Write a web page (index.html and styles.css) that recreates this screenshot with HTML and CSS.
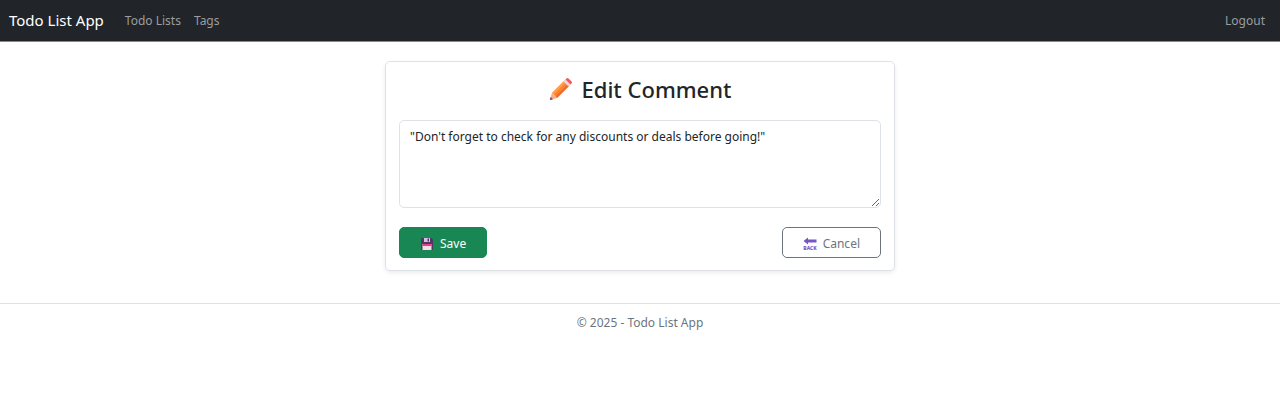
FILE: index.html
```html
<!DOCTYPE html>
<html lang="en">
<head>
<meta charset="utf-8">
<meta name="viewport" content="width=device-width, initial-scale=1">
<title>Edit Comment - Todo List App</title>
<link rel="stylesheet" href="styles.css">
</head>
<body>
<header class="navbar">
  <a class="brand" href="#">Todo List App</a>
  <nav class="nav-links">
    <a class="nav-link" href="#">Todo Lists</a>
    <a class="nav-link" href="#">Tags</a>
  </nav>
  <a class="nav-link logout" href="#">Logout</a>
</header>
<main class="content">
  <form class="card">
    <h1 class="title" id="form-title">
      <svg class="title-icon" viewBox="0 0 24 24" aria-hidden="true">
        <path fill="#ff822d" d="M3 16 15.500 3.500l5 5L8 21z"/>
        <path fill="#ffa04a" d="M3 16 15.500 3.500l1.500 1.500L4.500 17.500z"/>
        <path fill="#e96a35" d="M6.500 19.500 19 7l1.500 1.500L8 21z"/>
        <path fill="#e1d8ec" d="m14.500 4.500 2-2 5 5-2 2z"/>
        <path fill="#f8524f" d="m16.500 2.500 1-1q1-1 2 0l3 3q1 1 0 2l-1 1z"/>
        <path fill="#efb18c" d="m3 16 5 5-6.500 2q-1 0-.5-1z"/>
        <path fill="#7d4b55" d="m1.700 20 2.300 2.300-2.500.7q-1 0-.5-1z"/>
      </svg>
      Edit Comment
    </h1>
    <textarea class="comment" aria-labelledby="form-title">"Don't forget to check for any discounts or deals before going!"</textarea>
    <div class="actions">
      <button class="button save" type="submit">
        <svg class="button-icon" viewBox="0 0 14 14" aria-hidden="true">
          <path fill="#533566" d="M1 1.500Q1 1 1.500 1h10L13 2.500v10q0 .5-.5.5h-11q-.5 0-.5-.5z"/>
          <path fill="#cfc4e5" d="M4 1h6v4H4z"/>
          <path fill="#533566" d="M7.500 1.500H9v3H7.500z"/>
          <path fill="#f3dced" d="M2.500 7h9v6h-9z"/>
          <path fill="#ec407a" d="M2.500 7h9v2h-9z"/>
        </svg>
        Save
      </button>
      <a class="button cancel" href="#">
        <svg class="button-icon" viewBox="0 0 14 14" aria-hidden="true">
          <path fill="#7656c5" d="M.5 4 5 .5v2h8.500v3H5v2z"/>
          <text class="back-text" x="7" y="13">BACK</text>
        </svg>
        Cancel
      </a>
    </div>
  </form>
</main>
<footer class="footer">© 2025 - Todo List App</footer>
</body>
</html>
```
FILE: styles.css
```css
* {
  box-sizing: border-box;
}

body {
  margin: 0;
  background: #fff;
  color: #212529;
  font-family: "Noto Sans", "Open Sans", sans-serif;
  font-size: 12px;
  line-height: 20px;
}

.navbar {
  display: flex;
  align-items: center;
  padding: 6px 9px 7px;
  background: #212529;
  border-bottom: 1px solid #85888b;
}

.brand {
  margin-right: 15px;
  color: #fff;
  font-size: 15px;
  line-height: 28px;
  text-decoration: none;
}

.nav-links {
  display: flex;
  gap: 1px;
}

.nav-link {
  padding: 5px 6px 3px;
  color: #9b9d9f;
  text-decoration: none;
}

.logout {
  margin-left: auto;
}

.content {
  padding: 19px 10px 32px;
}

.card {
  max-width: 510px;
  margin: 0 auto;
  padding: 12px 13px;
  border: 1px solid #dee2e6;
  border-radius: 5px;
  box-shadow: 0 2px 4px rgba(0, 0, 0, 0.08);
}

.title {
  display: flex;
  align-items: center;
  justify-content: center;
  gap: 9px;
  margin: 0 0 16px;
  font-size: 22px;
  font-weight: 500;
  line-height: 30px;
}

.title-icon {
  width: 24px;
  height: 24px;
}

.comment {
  display: block;
  width: 100%;
  height: 88px;
  padding: 6px 10px;
  border: 1px solid #dee2e6;
  border-radius: 5px;
  background: #fff;
  color: inherit;
  font: inherit;
  resize: vertical;
}

.actions {
  display: flex;
  justify-content: space-between;
  margin-top: 19px;
}

.button {
  display: flex;
  align-items: center;
  gap: 6px;
  padding: 6px 20px 3px;
  border: 1px solid;
  border-radius: 5px;
  font: inherit;
  text-decoration: none;
}

.button-icon {
  width: 14px;
  height: 14px;
}

.save {
  border-color: #198754;
  background: #198754;
  color: #fff;
}

.cancel {
  border-color: #6c757d;
  color: #6c757d;
}

.back-text {
  fill: #7656c5;
  font-size: 5px;
  font-weight: 800;
  text-anchor: middle;
}

.footer {
  padding: 9px 10px;
  border-top: 1px solid #dee2e6;
  color: #6c757d;
  text-align: center;
}
```
